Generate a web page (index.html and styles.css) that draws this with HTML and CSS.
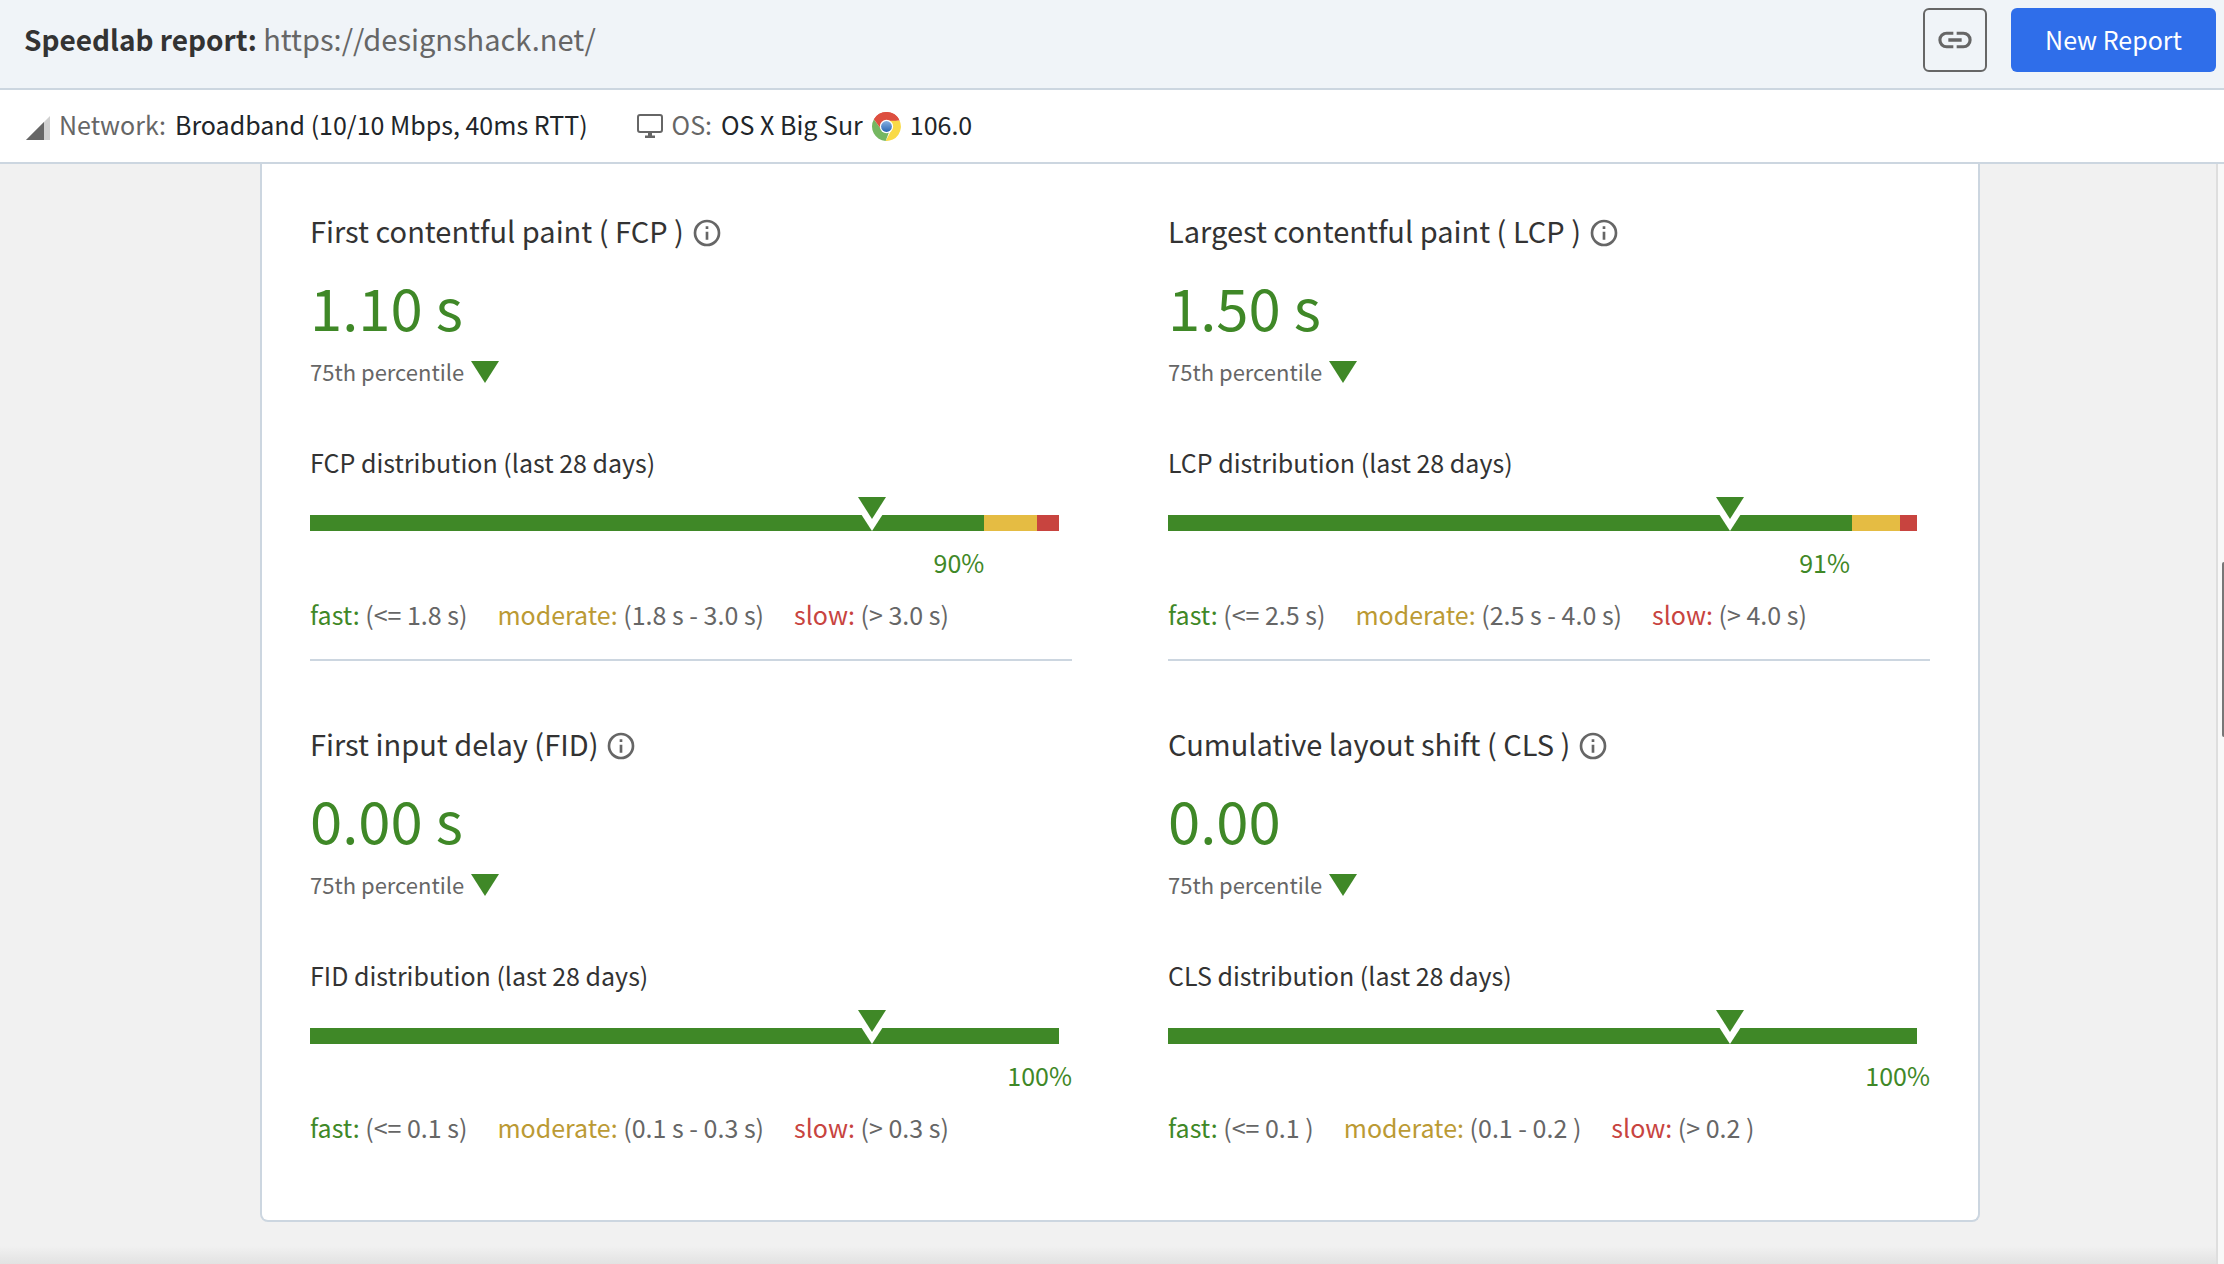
FILE: index.html
```html
<!DOCTYPE html>
<html lang="en">
<head>
<meta charset="utf-8">
<meta name="viewport" content="width=device-width, initial-scale=1">
<title>Speedlab report</title>
<link rel="stylesheet" href="styles.css">
</head>
<body>
<svg class="defs" aria-hidden="true">
  <symbol id="info" viewBox="0 0 24 24"><path d="M11 7h2v2h-2zm0 4h2v6h-2zm1-9a10 10 0 1 0 0 20 10 10 0 0 0 0-20zm0 18a8 8 0 1 1 0-16 8 8 0 0 1 0 16z"/></symbol>
  <symbol id="triangle" viewBox="0 0 28 22"><path d="M0 0h28L14 22z"/></symbol>
  <symbol id="marker" viewBox="0 0 44 34"><path class="marker-gap" d="M0 0h44L22 34z"/><path d="M8 0h28L22 22z"/></symbol>
</svg>

<header class="topbar">
  <h1 class="title">Speedlab report: <a class="title-link" href="https://designshack.net/">https://designshack.net/</a></h1>
  <div class="actions">
    <button class="copy-button" type="button" aria-label="Copy link">
      <svg class="link-icon" viewBox="0 0 24 24"><path d="M3.9 12c0-1.71 1.39-3.1 3.1-3.1h4V7H7a5 5 0 0 0 0 10h4v-1.900H7A3.100 3.100 0 0 1 3.900 12zM8 13h8v-2H8zm9-6h-4v1.900h4a3.100 3.100 0 0 1 0 6.200h-4V17h4a5 5 0 0 0 0-10z"/></svg>
    </button>
    <button class="new-button" type="button">New Report</button>
  </div>
</header>

<div class="infobar">
  <div class="info-item">
    <svg class="signal-icon" viewBox="0 0 24 24"><path d="M0 24L24 0v24z" fill="#d0d0d0"/><path d="M0 24L18 6v18z" fill="#666"/></svg>
    <span class="info-label">Network:</span>
    <span>Broadband (10/10 Mbps, 40ms RTT)</span>
  </div>
  <div class="info-item">
    <svg class="monitor-icon" viewBox="0 0 26 24"><rect x="1" y="1" width="24" height="17" rx="2" fill="none" stroke="#666" stroke-width="2"/><path d="M11 19h4v2.500h3V24H8v-2.500h3z" fill="#666"/></svg>
    <span class="info-label">OS:</span>
    <span>OS X Big Sur</span>
    <svg class="chrome-icon" viewBox="0 0 48 48">
      <defs><linearGradient id="core" x1="0" y1="0" x2="0" y2="1"><stop offset="0" stop-color="#86b0e0"/><stop offset="1" stop-color="#2a66b4"/></linearGradient></defs>
      <path fill="#dd4f40" d="M24 24L3.220 12A24 24 0 0 1 44.780 12z"/>
      <path fill="#f9da47" d="M24 14h21.660A24 24 0 0 1 22.500 47.950L32.660 29z"/>
      <path fill="#75b761" d="M3.220 12L15.340 29l8.660 5 4.500-1.500L22.500 47.950A24 24 0 0 1 3.220 12z"/>
      <path fill="#dd4f40" d="M3.220 12A24 24 0 0 1 45.660 14H24L15.340 29z"/>
      <circle cx="24" cy="24" r="11" fill="#fff"/><circle cx="24" cy="24" r="9" fill="url(#core)"/>
    </svg>
    <span>106.0</span>
  </div>
</div>

<div class="viewport">
  <main class="page">
    <div class="card">
      <section class="metric">
        <h2 class="metric-name">First contentful paint ( FCP ) <svg class="info-icon"><use href="#info"/></svg></h2>
        <p class="value">1.10 s</p>
        <p class="percentile">75th percentile <svg class="triangle"><use href="#triangle"/></svg></p>
        <h3 class="distribution">FCP distribution (last 28 days)</h3>
        <div class="bar"><span class="fast-bar" style="width:90%"></span><span class="moderate-bar" style="width:7%"></span><span class="slow-bar"></span><svg class="marker"><use href="#marker"/></svg></div>
        <p class="share" style="width:88.5%">90%</p>
        <ul class="legend"><li><span class="fast">fast:</span> (&lt;= 1.8 s)</li><li><span class="moderate">moderate:</span> (1.8 s - 3.0 s)</li><li><span class="slow">slow:</span> (&gt; 3.0 s)</li></ul>
      </section>
      <section class="metric">
        <h2 class="metric-name">Largest contentful paint ( LCP ) <svg class="info-icon"><use href="#info"/></svg></h2>
        <p class="value">1.50 s</p>
        <p class="percentile">75th percentile <svg class="triangle"><use href="#triangle"/></svg></p>
        <h3 class="distribution">LCP distribution (last 28 days)</h3>
        <div class="bar"><span class="fast-bar" style="width:91.3%"></span><span class="moderate-bar" style="width:6.4%"></span><span class="slow-bar"></span><svg class="marker"><use href="#marker"/></svg></div>
        <p class="share" style="width:89.5%">91%</p>
        <ul class="legend"><li><span class="fast">fast:</span> (&lt;= 2.5 s)</li><li><span class="moderate">moderate:</span> (2.5 s - 4.0 s)</li><li><span class="slow">slow:</span> (&gt; 4.0 s)</li></ul>
      </section>
      <section class="metric">
        <h2 class="metric-name">First input delay (FID) <svg class="info-icon"><use href="#info"/></svg></h2>
        <p class="value">0.00 s</p>
        <p class="percentile">75th percentile <svg class="triangle"><use href="#triangle"/></svg></p>
        <h3 class="distribution">FID distribution (last 28 days)</h3>
        <div class="bar"><span class="fast-bar" style="width:100%"></span><svg class="marker"><use href="#marker"/></svg></div>
        <p class="share" style="width:100%">100%</p>
        <ul class="legend"><li><span class="fast">fast:</span> (&lt;= 0.1 s)</li><li><span class="moderate">moderate:</span> (0.1 s - 0.3 s)</li><li><span class="slow">slow:</span> (&gt; 0.3 s)</li></ul>
      </section>
      <section class="metric">
        <h2 class="metric-name">Cumulative layout shift ( CLS ) <svg class="info-icon"><use href="#info"/></svg></h2>
        <p class="value">0.00</p>
        <p class="percentile">75th percentile <svg class="triangle"><use href="#triangle"/></svg></p>
        <h3 class="distribution">CLS distribution (last 28 days)</h3>
        <div class="bar"><span class="fast-bar" style="width:100%"></span><svg class="marker"><use href="#marker"/></svg></div>
        <p class="share" style="width:100%">100%</p>
        <ul class="legend"><li><span class="fast">fast:</span> (&lt;= 0.1 )</li><li><span class="moderate">moderate:</span> (0.1 - 0.2 )</li><li><span class="slow">slow:</span> (&gt; 0.2 )</li></ul>
      </section>
    </div>
  </main>
  <div class="scroll-track"><div class="scroll-thumb"></div></div>
</div>
</body>
</html>
```
FILE: styles.css
```css
* { box-sizing: border-box; }

body {
  margin: 0;
  min-height: 100vh;
  display: flex;
  flex-direction: column;
  background: #f1f1f1;
  color: #333;
  font: 400 25px/36px "Noto Sans CJK SC", "Noto Sans", sans-serif;
}

h1, h2, h3, p, ul { margin: 0; padding: 0; font-weight: 400; }
svg { flex: none; display: block; }
button { font: inherit; cursor: pointer; border-radius: 6px; }
.defs { position: absolute; width: 0; height: 0; }

/* Top bar */
.topbar {
  display: flex;
  align-items: flex-start;
  justify-content: space-between;
  padding: 8px 8px 16px 24px;
  background: #f0f4f8;
  border-bottom: 2px solid #ccd6e0;
}
.title { font-size: 28px; line-height: 60px; font-weight: 700; }
.title-link { color: #666; font-size: 29px; font-weight: 400; text-decoration: none; }
.actions { display: flex; gap: 24px; }
.copy-button {
  width: 64px;
  height: 64px;
  padding: 0;
  display: grid;
  place-items: center;
  background: transparent;
  border: 2px solid #666;
}
.link-icon { width: 40px; height: 40px; fill: #666; }
.new-button {
  height: 64px;
  padding: 0 34px 2px;
  border: 0;
  color: #fff;
  background: #2f6eea;
}

/* Test conditions */
.infobar {
  display: flex;
  gap: 49px;
  padding: 0 26px 4px;
  line-height: 68px;
  color: #212529;
  background: #fff;
  border-bottom: 2px solid #ccd6e0;
}
.info-item { display: flex; align-items: center; gap: 9px; }
.info-label { color: #666; }
.signal-icon { width: 24px; height: 24px; margin-top: 8px; }
.monitor-icon { width: 26px; height: 24px; margin-top: 4px; }
.chrome-icon { width: 29px; height: 29px; margin-top: 4px; }

/* Scrolled report */
.viewport { flex: 1; display: flex; }
.page {
  flex: 1;
  padding: 0 0 42px 24px;
  background: linear-gradient(to top, #e2e2e2, #f1f1f1 18px);
}
.card {
  max-width: 1720px;
  margin: 0 auto;
  padding: 46px 48px 75px;
  display: grid;
  grid-template-columns: 1fr 1fr;
  gap: 62px 96px;
  background: #fff;
  border: 2px solid #ccd6e0;
  border-top: 0;
  border-radius: 0 0 8px 8px;
}
.metric:nth-child(-n+2) { padding-bottom: 27px; border-bottom: 2px solid #ccd6e0; }
.metric-name { display: flex; align-items: center; gap: 7px; font-size: 29px; line-height: 40px; }
.info-icon { width: 32px; height: 32px; margin-top: 6px; fill: #666; }
.value { margin-top: 18px; font-size: 58px; line-height: 76px; color: #3f8827; }
.percentile {
  margin-top: 11px;
  display: flex;
  align-items: center;
  gap: 7px;
  font-size: 22px;
  line-height: 32px;
  color: #666;
}
.triangle { width: 28px; height: 22px; margin-top: 2px; fill: #3f8827; }
.distribution { margin-top: 57px; font-size: 25px; }
.bar { position: relative; display: flex; width: 98.3%; height: 16px; margin-top: 35px; }
.fast-bar { background: #3f8827; }
.moderate-bar { background: #e5bc43; }
.slow-bar { flex: 1; background: #c8443f; }
.marker {
  position: absolute;
  left: 75%;
  bottom: 0;
  width: 44px;
  height: 34px;
  margin-left: -22px;
  fill: #3f8827;
}
.marker-gap { fill: #fff; }
.share { margin-top: 13px; text-align: right; color: #3f8827; }
.legend { display: flex; gap: 30px; margin-top: 16px; list-style: none; color: #666; }
.fast { color: #3f8827; }
.moderate { color: #bb9a34; }
.slow { color: #c8443f; }

.scroll-track { width: 8px; padding-top: 398px; background: #f8f8f8; border-left: 2px solid #dedede; }
.scroll-thumb { height: 175px; margin-left: 4px; border-radius: 4px 0 0 4px; background: #777; }
```
